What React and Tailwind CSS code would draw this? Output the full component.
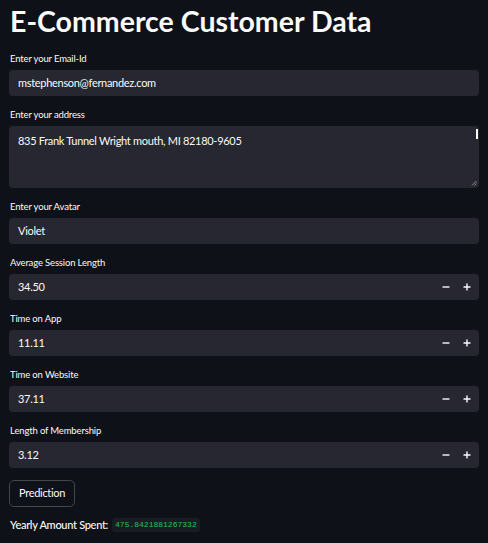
import React from 'react'

const font = { fontFamily: 'Lato, "Noto Sans", sans-serif' }

const Label = ({ children }) => (
  <div className="h-[14px] text-[9.5px] tracking-[-0.15px] leading-[15px] text-[#fafafa] mb-[5px] pl-[1px]">{children}</div>
)

const TextField = ({ label, value }) => (
  <div className="mb-[11px]">
    <Label>{label}</Label>
    <div className="h-[26px] rounded-[4px] bg-[#262730] flex items-center px-[9px] text-[11px] tracking-[-0.3px]">{value}</div>
  </div>
)

const Minus = () => (
  <svg width="8" height="8" viewBox="0 0 8 8"><path d="M0.5 4h7" stroke="#fafafa" strokeWidth="1.4" /></svg>
)
const Plus = () => (
  <svg width="8" height="8" viewBox="0 0 8 8"><path d="M0.5 4h7M4 0.5v7" stroke="#fafafa" strokeWidth="1.4" /></svg>
)

const NumberField = ({ label, value }) => (
  <div className="mb-[11px]">
    <Label>{label}</Label>
    <div className="h-[26px] rounded-[4px] bg-[#262730] flex items-center pl-[9px] text-[11px] tracking-[-0.3px]">
      <span className="flex-1">{value}</span>
      <div className="flex items-center h-full">
        <button className="w-[21px] h-full flex items-center justify-center"><Minus /></button>
        <button className="w-[21px] h-full flex items-center justify-center mr-[2px]"><Plus /></button>
      </div>
    </div>
  </div>
)

export default function App() {
  return (
    <div className="min-h-screen w-full bg-[#0e1117] text-[#fafafa] px-[9px]" style={font}>
      <h1 className="text-[28.5px] font-bold leading-[42px] mb-[9px] pl-[1px]">E-Commerce Customer Data</h1>

      <TextField label="Enter your Email-Id" value="mstephenson@fernandez.com" />

      <div className="mb-[11px]">
        <Label>Enter your address</Label>
        <div className="relative h-[62px] rounded-[4px] bg-[#262730] px-[9px] pt-[7px] text-[11px] tracking-[-0.3px] leading-[16px]">
          835 Frank Tunnel Wright mouth, MI 82180-9605
          <div className="absolute right-[1px] top-[3px] w-[2px] h-[10px] bg-[#fafafa]" />
          <svg className="absolute right-[2px] bottom-[2px]" width="6" height="6" viewBox="0 0 6 6">
            <path d="M1 5.5L5.5 1M3.5 5.5L5.5 3.5" stroke="#aaa" strokeWidth="0.8" />
          </svg>
        </div>
      </div>

      <TextField label="Enter your Avatar" value="Violet" />

      <NumberField label="Average Session Length" value="34.50" />
      <NumberField label="Time on App" value="11.11" />
      <NumberField label="Time on Website" value="37.11" />
      <NumberField label="Length of Membership" value="3.12" />

      <button className="h-[27px] px-[9px] rounded-[5px] border border-[#44454e] text-[11px] tracking-[-0.3px] text-[#fafafa]">Prediction</button>

      <div className="flex items-center mt-[10px] text-[11px] tracking-[-0.3px] pl-[1px] font-medium">
        <span>Yearly Amount Spent:</span>
        <span className="ml-[4px] px-[3px] py-[1px] rounded-[3px] bg-[#1a1c24] text-[#21c354] text-[8px] tracking-normal" style={{ fontFamily: '"Liberation Mono", monospace' }}>475.8421881267332</span>
      </div>
    </div>
  )
}
